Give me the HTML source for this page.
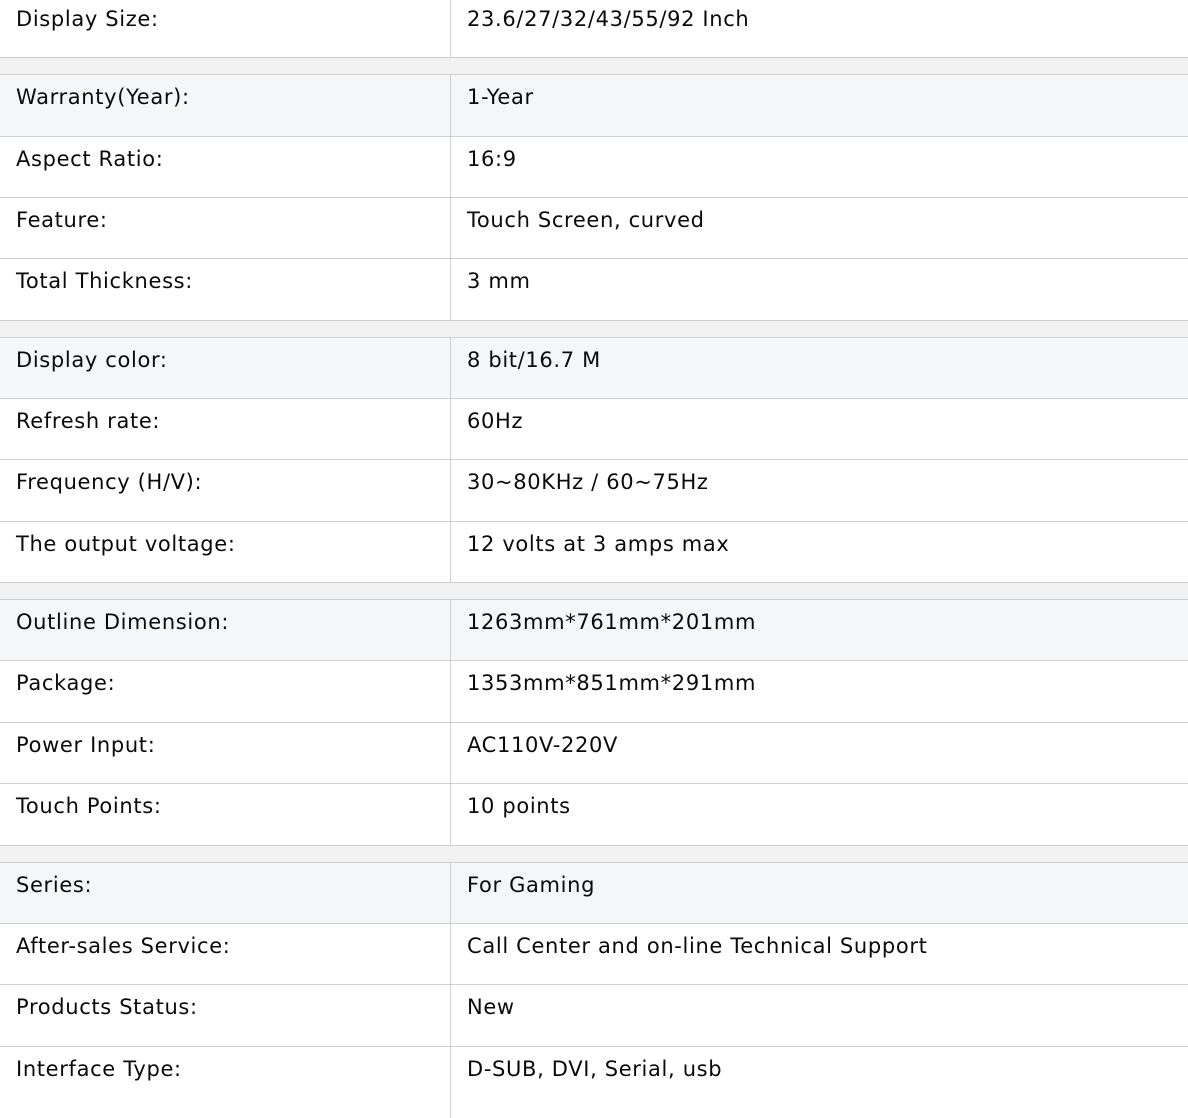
<!DOCTYPE html>
<html><head><meta charset="utf-8"><style>
body{margin:0;width:1188px;height:1105px;overflow:hidden;background:#fff;font-family:"DejaVu Sans","Liberation Sans",sans-serif;font-size:21px;letter-spacing:0.65px;color:#0a0a0a;position:relative}
.r{position:absolute;left:0;width:1188px;border-bottom:1px solid #cfcfcf;box-sizing:border-box}
.g{background:#f5f6f8}
.s{background:#f2f2f2}
.r .a,.r .b{position:absolute;top:10px;line-height:24px;white-space:nowrap}
.r .a{left:16px}
.r .b{left:467px}
.r .v{position:absolute;left:450px;top:0;bottom:-1px;width:1px;background:#cfcfcf}
</style></head><body>
<div class="r" style="top:-3px;height:61px"><div class="v"></div><span class="a">Display Size:</span><span class="b">23.6/27/32/43/55/92 Inch</span></div>
<div class="r s" style="top:58px;height:17px"></div>
<div class="r g" style="top:75px;height:62px"><div class="v"></div><span class="a">Warranty(Year):</span><span class="b">1-Year</span></div>
<div class="r" style="top:137px;height:61px"><div class="v"></div><span class="a">Aspect Ratio:</span><span class="b">16:9</span></div>
<div class="r" style="top:198px;height:61px"><div class="v"></div><span class="a">Feature:</span><span class="b">Touch Screen, curved</span></div>
<div class="r" style="top:259px;height:62px"><div class="v"></div><span class="a">Total Thickness:</span><span class="b">3 mm</span></div>
<div class="r s" style="top:321px;height:17px"></div>
<div class="r g" style="top:338px;height:61px"><div class="v"></div><span class="a">Display color:</span><span class="b">8 bit/16.7 M</span></div>
<div class="r" style="top:399px;height:61px"><div class="v"></div><span class="a">Refresh rate:</span><span class="b">60Hz</span></div>
<div class="r" style="top:460px;height:62px"><div class="v"></div><span class="a">Frequency (H/V):</span><span class="b">30~80KHz / 60~75Hz</span></div>
<div class="r" style="top:522px;height:61px"><div class="v"></div><span class="a">The output voltage:</span><span class="b">12 volts at 3 amps max</span></div>
<div class="r s" style="top:583px;height:17px"></div>
<div class="r g" style="top:600px;height:61px"><div class="v"></div><span class="a">Outline Dimension:</span><span class="b">1263mm*761mm*201mm</span></div>
<div class="r" style="top:661px;height:62px"><div class="v"></div><span class="a">Package:</span><span class="b">1353mm*851mm*291mm</span></div>
<div class="r" style="top:723px;height:61px"><div class="v"></div><span class="a">Power Input:</span><span class="b">AC110V-220V</span></div>
<div class="r" style="top:784px;height:62px"><div class="v"></div><span class="a">Touch Points:</span><span class="b">10 points</span></div>
<div class="r s" style="top:846px;height:17px"></div>
<div class="r g" style="top:863px;height:61px"><div class="v"></div><span class="a">Series:</span><span class="b">For Gaming</span></div>
<div class="r" style="top:924px;height:61px"><div class="v"></div><span class="a">After-sales Service:</span><span class="b">Call Center and on-line Technical Support</span></div>
<div class="r" style="top:985px;height:62px"><div class="v"></div><span class="a">Products Status:</span><span class="b">New</span></div>
<div class="r" style="top:1047px;height:70px;border-bottom:none"><div class="v"></div><span class="a">Interface Type:</span><span class="b">D-SUB, DVI, Serial, usb</span></div>
</body></html>
